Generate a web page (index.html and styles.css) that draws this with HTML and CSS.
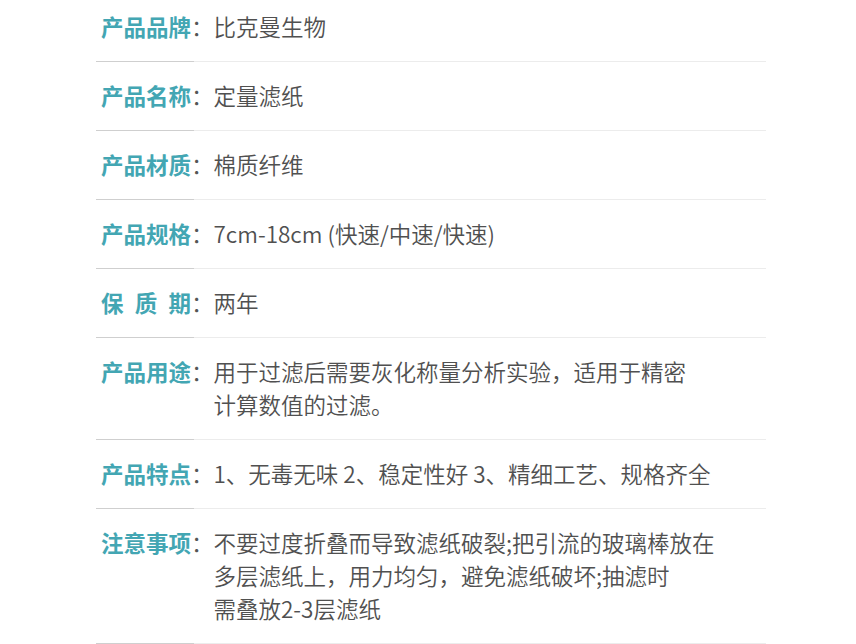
FILE: index.html
```html
<!DOCTYPE html>
<html lang="zh">
<head>
<meta charset="utf-8">
<link rel="stylesheet" href="styles.css">
</head>
<body>
<div class="specs">
  <div class="row"><span class="label">产品品牌</span><span class="colon">：</span><span class="value">比克曼生物</span></div>
  <div class="row"><span class="label">产品名称</span><span class="colon">：</span><span class="value">定量滤纸</span></div>
  <div class="row"><span class="label">产品材质</span><span class="colon">：</span><span class="value">棉质纤维</span></div>
  <div class="row"><span class="label">产品规格</span><span class="colon">：</span><span class="value">7cm-18cm (快速/中速/快速)</span></div>
  <div class="row"><span class="label justify">保质期</span><span class="colon">：</span><span class="value">两年</span></div>
  <div class="row"><span class="label">产品用途</span><span class="colon">：</span><span class="value">用于过滤后需要灰化称量分析实验，适用于精密<br>计算数值的过滤。</span></div>
  <div class="row"><span class="label">产品特点</span><span class="colon">：</span><span class="value">1、无毒无味 2、稳定性好 3、精细工艺、规格齐全</span></div>
  <div class="row"><span class="label">注意事项</span><span class="colon">：</span><span class="value">不要过度折叠而导致滤纸破裂;把引流的玻璃棒放在<br>多层滤纸上，用力均匀，避免滤纸破坏;抽滤时<br>需叠放2-3层滤纸</span></div>
</div>
</body>
</html>
```
FILE: styles.css
```css
html, body {
  margin: 0;
  padding: 0;
  background: #fff;
}
body {
  font-family: "Noto Sans CJK SC", "Noto Sans", sans-serif;
  font-size: 22.5px;
  line-height: 33px;
}
.specs {
  width: 670px;
  margin: -7px 0 0 96px;
}
.row {
  display: flex;
  align-items: flex-start;
  padding: 17px 0 19px 5px;
  background: linear-gradient(to right, #cfcfcf 98px, #ececec 98px) left bottom / 100% 1px no-repeat;
}
.label {
  width: 90px;
  color: #43a6b3;
  font-weight: 700;
  white-space: nowrap;
}
.label.justify {
  text-align: justify;
  text-align-last: justify;
}
.colon {
  width: 22.5px;
  color: #555;
  font-weight: 350;
}
.value {
  flex: 1;
  color: #505050;
  font-weight: 350;
  white-space: nowrap;
}
```
